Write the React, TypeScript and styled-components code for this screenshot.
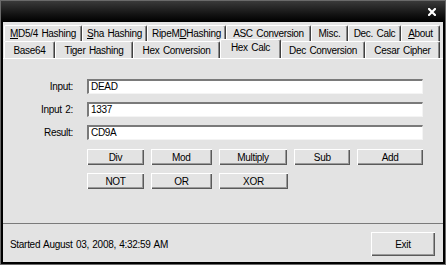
import React from "react";
import styled, { createGlobalStyle } from "styled-components";

const Global = createGlobalStyle`
  html, body { margin: 0; padding: 0; background: #000; }
  * { box-sizing: border-box; }
`;

const Window = styled.div`
  width: 446px;
  height: 265px;
  background: #000;
  border: 1px solid #6a6a6a;
  padding: 0 2px 2px 2px;
  display: flex;
  flex-direction: column;
  font-family: "Liberation Sans", Arial, sans-serif;
  font-size: 10px;
  letter-spacing: -0.3px;
  word-spacing: 1px;
  color: #000;
`;

const TitleBar = styled.div`
  height: 21px;
  margin: 0 -2px;
  background: linear-gradient(#3a3a3a 0%, #151515 60%, #000 100%);
  display: flex;
  align-items: center;
  justify-content: flex-end;
  padding-right: 9px;
  flex: none;
`;

const Body = styled.div`
  flex: 1;
  background: #e3e3e3;
  display: flex;
  flex-direction: column;
  min-height: 0;
`;

const TabStrip = styled.div`
  padding: 3px 0 0 1px;
  display: flex;
  flex-direction: column;
`;

const TabRow = styled.div<{ $h: number }>`
  display: flex;
  height: ${(p) => p.$h}px;
  align-items: flex-end;
`;

const Tab = styled.div<{ $w: number; $active?: boolean }>`
  position: relative;
  width: ${(p) => p.$w}px;
  height: ${(p) => (p.$active ? "calc(100% + 2px)" : "100%")};
  margin-top: ${(p) => (p.$active ? "-2px" : "0")};
  display: flex;
  align-items: center;
  justify-content: center;
  padding-bottom: ${(p) => (p.$active ? "3px" : "0")};
  border-top: 1px solid #fff;
  border-left: 1px solid #fff;
  border-right: 1px solid #404040;
  box-shadow: inset -1px 0 #8a8a8a;
  border-radius: 2px 2px 0 0;
  background: #e3e3e3;
  white-space: nowrap;
  z-index: ${(p) => (p.$active ? 2 : 1)};
`;

const Panel = styled.div`
  height: 165px;
  border-top: 1px solid #fff;
  padding: 20px 20px 0 0;
  display: grid;
  grid-template-columns: 70px 336px;
  column-gap: 14px;
  row-gap: 8px;
  align-content: start;
`;

const Label = styled.div`
  text-align: right;
  align-self: center;
  line-height: 15px;
`;

const Field = styled.div`
  height: 15px;
  background: #fff;
  border-top: 2px solid #7a7a7a;
  border-left: 2px solid #7a7a7a;
  border-right: 1px solid #f4f4f4;
  border-bottom: 1px solid #f4f4f4;
  padding-left: 2px;
  line-height: 12px;
`;

const ButtonGroup = styled.div`
  grid-column: 2;
  display: flex;
  flex-direction: column;
  gap: 8px;
  margin-top: 1px;
`;

const ButtonRow = styled.div`
  display: flex;
  gap: 7px;
`;

const Button = styled.div<{ $w: number; $h?: number }>`
  width: ${(p) => p.$w}px;
  height: ${(p) => p.$h ?? 16}px;
  display: flex;
  align-items: center;
  justify-content: center;
  background: #e3e3e3;
  box-shadow: inset 1px 1px #fff, inset -1px -1px #5a5a5a, inset -2px -2px #9a9a9a;
`;

const Footer = styled.div`
  flex: 1;
  border-top: 1px solid #7a7a7a;
  display: flex;
  align-items: center;
  justify-content: space-between;
  padding: 2px 8px 0 7px;
`;

const Status = styled.div`
  white-space: nowrap;
`;

const CloseIcon = () => (
  <svg width="8" height="8" viewBox="0 0 8 8">
    <path d="M1 1 L7 7 M7 1 L1 7" stroke="#fff" strokeWidth="2.2" strokeLinecap="square" />
  </svg>
);

const row1 = [
  { w: 78, t: <><u>M</u>D5/4 Hashing</> },
  { w: 65, t: <><u>S</u>ha Hashing</> },
  { w: 79, t: <>RipeM<u>D</u>{" "}Hashing</> },
  { w: 85, t: <>ASC Conversion</> },
  { w: 37, t: <>Misc.</> },
  { w: 53, t: <>Dec. Calc</> },
  { w: 39, t: <><u>A</u>bout</> },
];

const row2 = [
  { w: 51, t: "Base64" },
  { w: 78, t: "Tiger Hashing" },
  { w: 87, t: "Hex Conversion" },
  { w: 61, t: "Hex Calc", active: true },
  { w: 84, t: "Dec Conversion" },
  { w: 75, t: "Cesar Cipher" },
];

const ops1 = [
  { w: 57, t: "Div" },
  { w: 61, t: "Mod" },
  { w: 69, t: "Multiply" },
  { w: 56, t: "Sub" },
  { w: 66, t: "Add" },
];
const ops2 = [
  { w: 57, t: "NOT" },
  { w: 61, t: "OR" },
  { w: 69, t: "XOR" },
];

export default function App() {
  return (
    <>
      <Global />
      <Window>
        <TitleBar>
          <CloseIcon />
        </TitleBar>
        <Body>
          <TabStrip>
            <TabRow $h={16}>
              {row1.map((t, i) => (
                <Tab key={i} $w={t.w}>{t.t}</Tab>
              ))}
            </TabRow>
            <TabRow $h={17}>
              {row2.map((t, i) => (
                <Tab key={i} $w={t.w} $active={t.active}>{t.t}</Tab>
              ))}
            </TabRow>
          </TabStrip>
          <Panel>
            <Label>Input:</Label>
            <Field>DEAD</Field>
            <Label>Input 2:</Label>
            <Field>1337</Field>
            <Label>Result:</Label>
            <Field>CD9A</Field>
            <ButtonGroup>
              <ButtonRow>
                {ops1.map((b) => (
                  <Button key={b.t} $w={b.w}>{b.t}</Button>
                ))}
              </ButtonRow>
              <ButtonRow>
                {ops2.map((b) => (
                  <Button key={b.t} $w={b.w}>{b.t}</Button>
                ))}
              </ButtonRow>
            </ButtonGroup>
          </Panel>
          <Footer>
            <Status>Started August 03, 2008, 4:32:59 AM</Status>
            <Button $w={64} $h={24}>Exit</Button>
          </Footer>
        </Body>
      </Window>
    </>
  );
}
